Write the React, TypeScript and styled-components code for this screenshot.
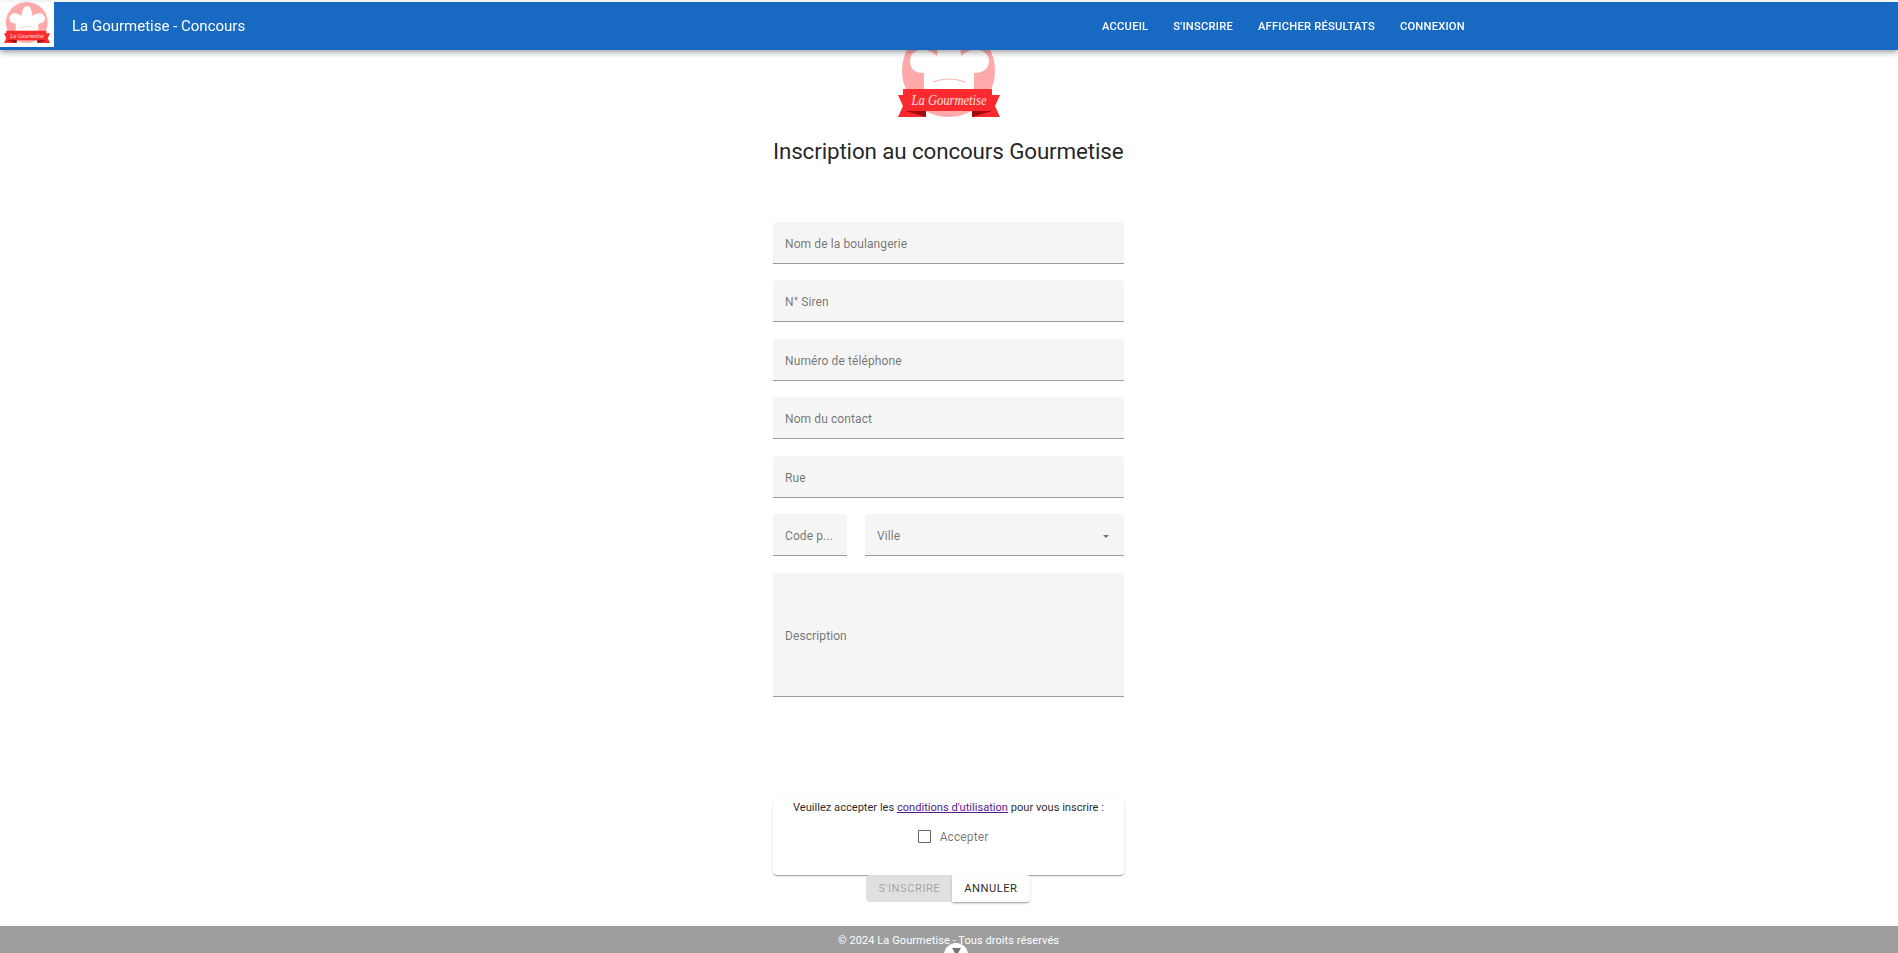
import React from "react";
import styled, { createGlobalStyle } from "styled-components";

const GlobalStyle = createGlobalStyle`
  html, body { margin: 0; padding: 0; height: 100%; background: #fff; overflow: hidden; }
  body { font-family: Roboto, "Liberation Sans", sans-serif; color: rgba(0,0,0,.87); }
`;

// same drawing for navbar and page, only the size changes
const LogoArt = ({ className }: { className?: string }) => (
    <svg className={className} viewBox="0 0 102 93" preserveAspectRatio="none" role="img" aria-label="La Gourmetise">
        <circle cx="50.5" cy="46.5" r="46.5" fill="#ffaaaa" />
        <path
            d="M26 65V49C15 49 12 43 12 37C12 29 20 24 28 26C32 27 36 29 39 32C40 18 44 9 51 9C58 9 62 18 63 32C66 29 70 27 74 26C82 24 91 29 91 37C91 43 87 49 76 49V65Z"
            fill="#fff"
        />
        <path d="M35 58Q51 52 67 58" fill="none" stroke="#ffb4b4" strokeWidth="1.2" />
        <path d="M0 71H5V65H94V71H102L97 82L102 93H74V87H28V93H0L5 82Z" fill="#fb2a2e" />
        <path d="M7 87H28V93ZM94 87H74V93Z" fill="#a00a0d" />
        <text
            x="51"
            y="81"
            textAnchor="middle"
            fontFamily="'Liberation Serif', serif"
            fontStyle="italic"
            fontSize="14"
            textLength="75"
            lengthAdjust="spacingAndGlyphs"
            fill="#ffe6e6"
        >
            La Gourmetise
        </text>
    </svg>
);

const NavBar = styled.header`
  position: fixed;
  z-index: 2;
  top: 2px; left: 0; right: 0;
  height: 48px;
  display: flex;
  align-items: center;
  background: #1769c2;
  box-shadow: 0 2px 4px -1px rgba(0,0,0,.2), 0 4px 5px rgba(0,0,0,.14), 0 1px 10px rgba(0,0,0,.12);
  color: #fff;
`;

const NavLogoBox = styled.div`
  width: 54px; height: 45px;
  align-self: flex-start;
  background: #fff;
  display: flex;
  justify-content: center;
`;

const NavLogo = styled(LogoArt)`
  width: 46px; height: 41px;
`;

const NavTitle = styled.div`
  margin-left: 18px;
  font-size: 15px;
  width: 1030px;
`;

const NavLinks = styled.nav`
  display: flex;
  gap: 25px;
`;

const NavLink = styled.a`
  font-size: 11.2px;
  font-weight: 500;
  letter-spacing: .22px;
  text-transform: uppercase;
`;

const Page = styled.main`
  width: 352px;
  padding-right: 1px;
  margin: 0 auto;
  padding-top: 24px;
  display: flex;
  flex-direction: column;
  box-sizing: border-box;
  height: 953px;
`;

const PageLogo = styled(LogoArt)`
  width: 102px; height: 93px;
  align-self: center;
  flex: none;
`;

const Title = styled.h1`
  margin: 20px 0 56.5px;
  font-size: 22.4px;
  line-height: 28px;
  font-weight: 400;
  letter-spacing: -.13px;
  white-space: nowrap;
  color: rgba(0,0,0,.87);
`;

const Fields = styled.form`
  display: flex;
  flex-direction: column;
  gap: 16.6px;
`;

const Row = styled.div`
  display: flex;
  gap: 18px;
`;

const Field = styled.div<{ $width?: number; $grow?: boolean; $tall?: boolean }>`
  flex: ${p => p.$grow ? "1" : "none"};
  ${p => p.$width ? `width: ${p.$width}px;` : ""}
  height: ${p => p.$tall ? 124 : 42}px;
  box-sizing: ${p => p.$width ? "content-box" : "border-box"};
  ${p => p.$width ? "height: 38px;" : ""}
  padding: 3px 12px 0;
  display: flex;
  align-items: center;
  justify-content: space-between;
  background: #f5f5f5;
  border-bottom: 1px solid #9e9e9e;
  border-radius: 4px 4px 0 0;
  font-size: 12px;
  letter-spacing: .1px;
  color: rgba(0,0,0,.55);
  white-space: nowrap;
`;

const Caret = styled.span`
  width: 0; height: 0;
  margin-right: 3px;
  border-left: 3.5px solid transparent;
  border-right: 3.5px solid transparent;
  border-top: 3.5px solid rgba(0,0,0,.54);
`;

const TermsCard = styled.section`
  margin-top: 100.5px;
  height: 77px;
  box-sizing: border-box;
  padding-top: 2px;
  background: #fff;
  border-radius: 4px;
  box-shadow: 0 2px 1px -1px rgba(0,0,0,.2), 0 1px 1px rgba(0,0,0,.14), 0 1px 3px rgba(0,0,0,.12);
  display: flex;
  flex-direction: column;
  align-items: center;
`;

const TermsText = styled.p`
  margin: 0;
  font-size: 11.1px;
  line-height: 16px;
  color: rgba(0,0,0,.87);
`;

const TermsLink = styled.a`
  color: #551a8b;
  text-decoration: underline;
`;

const AcceptRow = styled.label`
  margin-top: 14px;
  padding-left: 9px;
  display: flex;
  align-items: center;
  gap: 9px;
  font-size: 12px;
  letter-spacing: .1px;
  color: rgba(0,0,0,.55);
`;

const CheckBox = styled.span`
  width: 11px; height: 11px;
  border: 1.5px solid rgba(0,0,0,.6);
  border-radius: 1px;
`;

const Actions = styled.div`
  display: flex;
  justify-content: center;
  padding-right: 1px;
`;

const ActionButton = styled.button<{ $disabled?: boolean }>`
  height: 27px;
  padding: 0 12px;
  border: none;
  border-radius: ${p => p.$disabled ? "4px 0 0 4px" : "0 4px 4px 0"};
  font-family: inherit;
  font-size: 11.2px;
  font-weight: 400;
  letter-spacing: .5px;
  text-transform: uppercase;
  background: ${p => p.$disabled ? "#e0e0e0" : "#fff"};
  color: ${p => p.$disabled ? "rgba(0,0,0,.3)" : "rgba(0,0,0,.87)"};
  box-shadow: ${p => p.$disabled ? "none" : "0 2px 2px -1px rgba(0,0,0,.3), 0 1px 3px rgba(0,0,0,.15)"};
`;

const Footer = styled.footer`
  position: fixed;
  bottom: 0; left: 0; right: 0;
  height: 27px;
  background: #9e9e9e;
  color: #fff;
  font-size: 11px;
  letter-spacing: .08px;
  text-align: center;
  line-height: 29px;
  padding-right: 1px;
`;

const ScrollTab = styled.span`
  position: fixed;
  bottom: -3px; left: 944px;
  width: 24px; height: 13px;
  border-radius: 12px 12px 0 0;
  background: #fff;
  color: #757575;
  display: flex;
  justify-content: center;
`;

const ScrollArrow = styled.svg`
  width: 9px; height: 8px;
  margin-top: 5px;
`;

const App = () => {
    return <>
        <GlobalStyle />
        <NavBar>
            <NavLogoBox><NavLogo /></NavLogoBox>
            <NavTitle>La Gourmetise - Concours</NavTitle>
            <NavLinks>
                <NavLink>Accueil</NavLink>
                <NavLink>S'inscrire</NavLink>
                <NavLink>Afficher résultats</NavLink>
                <NavLink>Connexion</NavLink>
            </NavLinks>
        </NavBar>

        <Page>
            <PageLogo />
            <Title>Inscription au concours Gourmetise</Title>

            <Fields>
                <Field>Nom de la boulangerie</Field>
                <Field>N° Siren</Field>
                <Field>Numéro de téléphone</Field>
                <Field>Nom du contact</Field>
                <Field>Rue</Field>
                <Row>
                    <Field $width={50}>Code p...</Field>
                    <Field $grow>Ville<Caret /></Field>
                </Row>
                <Field $tall>Description</Field>
            </Fields>

            <TermsCard>
                <TermsText>
                    Veuillez accepter les <TermsLink>conditions d'utilisation</TermsLink> pour vous inscrire :
                </TermsText>
                <AcceptRow><CheckBox />Accepter</AcceptRow>
            </TermsCard>

            <Actions>
                <ActionButton $disabled>S'inscrire</ActionButton>
                <ActionButton>Annuler</ActionButton>
            </Actions>
        </Page>

        <Footer>© 2024 La Gourmetise - Tous droits réservés</Footer>
        <ScrollTab>
            <ScrollArrow viewBox="0 0 10 9"><path d="M0 0H10L5 9Z" fill="currentColor" /></ScrollArrow>
        </ScrollTab>
    </>
}
export default App
